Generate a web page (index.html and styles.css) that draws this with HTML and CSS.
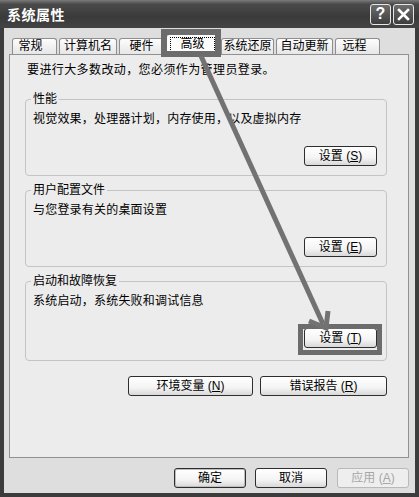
FILE: index.html
```html
<!DOCTYPE html>
<html lang="zh-CN">
<head>
	<meta charset="UTF-8">
	<title>系统属性</title>
	<link rel="stylesheet" href="styles.css">
</head>
<body>
	<div class="window">
		<div class="titlebar">
			<span class="title">系统属性</span>
			<span class="tbtn help">?</span>
			<span class="tbtn close">
				<svg width="13" height="13" viewBox="0 0 13 13"><path d="M2 2L11 11M11 2L2 11" stroke="#fff" stroke-width="2.6" stroke-linecap="square"/></svg>
			</span>
		</div>
		<div class="frame">
			<div class="tabs">
				<span class="tab t1">常规</span>
				<span class="tab t2">计算机名</span>
				<span class="tab t3">硬件</span>
				<span class="tab on"><span class="focus">高级</span></span>
				<span class="tab t5">系统还原</span>
				<span class="tab t6">自动更新</span>
				<span class="tab t7">远程</span>
			</div>
			<div class="panel">
				<p class="note">要进行大多数改动，您必须作为管理员登录。</p>
				<fieldset class="group">
					<legend>性能</legend>
					<p>视觉效果，处理器计划，内存使用，以及虚拟内存</p>
					<div class="act"><button class="btn">设置 (<u>S</u>)</button></div>
				</fieldset>
				<fieldset class="group">
					<legend>用户配置文件</legend>
					<p>与您登录有关的桌面设置</p>
					<div class="act"><button class="btn">设置 (<u>E</u>)</button></div>
				</fieldset>
				<fieldset class="group last">
					<legend>启动和故障恢复</legend>
					<p>系统启动，系统失败和调试信息</p>
					<div class="act"><button class="btn">设置 (<u>T</u>)</button></div>
				</fieldset>
				<div class="row">
					<button class="btn env">环境变量 (<u>N</u>)</button>
					<button class="btn err">错误报告 (<u>R</u>)</button>
				</div>
			</div>
			<div class="footer">
				<button class="btn def">确定</button>
				<button class="btn">取消</button>
				<button class="btn off">应用 (<u>A</u>)</button>
			</div>
		</div>

		<!-- 标注：高亮框和箭头 -->
		<div class="mark mark-tab"></div>
		<div class="mark mark-btn"></div>
		<svg class="arrow" width="419" height="497" viewBox="0 0 419 497">
			<line x1="201" y1="56" x2="323" y2="324" stroke="#727272" stroke-width="5"/>
			<polyline points="309,321 326,328 328,311" fill="none" stroke="#727272" stroke-width="5"/>
		</svg>
	</div>
</body>
</html>
```

FILE: styles.css
```css
* {
	margin: 0;
	padding: 0;
	box-sizing: border-box;
}
body {
	width: 419px;
	height: 497px;
	overflow: hidden;
	font-family: "Liberation Sans", "Noto Sans CJK SC", sans-serif;
	font-size: 12px;
	color: #000;
}
.window {
	position: relative;
	width: 419px;
	height: 497px;
	background: #3c3c3c;
	display: flex;
	flex-direction: column;
}
.titlebar {
	height: 28px;
	display: flex;
	align-items: center;
	gap: 2px;
	padding: 0 5px 0 7px;
	background: linear-gradient(#7a7a7a, #4a4a4a 15%, #3a3a3a 60%, #444);
}
.title {
	flex: 1;
	color: #fff;
	font-weight: bold;
	font-size: 14px;
	letter-spacing: 0.5px;
	font-family: "Noto Sans CJK SC", sans-serif;
}
.tbtn {
	width: 21px;
	height: 21px;
	border: 1px solid #e6e6e6;
	border-radius: 3px;
	background: linear-gradient(#6c6c6c, #3e3e3e);
	color: #fff;
	font-weight: bold;
	font-size: 16px;
	display: flex;
	align-items: center;
	justify-content: center;
}
.frame {
	flex: 1;
	margin: 0 4px 4px;
	padding: 0 6px 0 5px;
	background: #dedede;
	display: flex;
	flex-direction: column;
}
.tabs {
	height: 26px;
	display: flex;
	align-items: flex-end;
	gap: 2px;
	padding-left: 3px;
	position: relative;
	z-index: 1;
}
.tab {
	height: 16px;
	line-height: 15px;
	text-align: center;
	border: 1px solid #8e8e8e;
	border-bottom: none;
	border-radius: 3px 3px 0 0;
	background: linear-gradient(#fdfdfd, #e6e6e6);
	white-space: nowrap;
}
.t1 { width: 45px; padding-right: 8px; }
.t2 { width: 58px; }
.t3 { width: 45px; }
.t5 { width: 53px; }
.t6 { width: 57px; }
.t7 { width: 45px; padding-right: 6px; }
.tab.on {
	width: 53px;
	height: 21px;
	margin-bottom: -1px;
	padding-top: 2px;
	background: #fcfcfc;
}
.focus {
	display: inline-block;
	width: 45px;
	height: 15px;
	line-height: 13px;
	border: 1px dotted #000;
}
.panel {
	height: 404px;
	border: 1px solid #919191;
	background: #ececec;
	padding: 8px 21px 0 15px;
}
.note {
	line-height: 14px;
	margin-left: 2px;
	letter-spacing: 0.4px;
}
.group {
	margin-top: 7px;
	border: 1px solid #c4c4c4;
	border-radius: 4px;
	padding: 6px 9px 9px 7px;
}
.panel .group:first-of-type {
	margin-top: 15px;
}
.group.last {
	padding-bottom: 12px;
}
.group legend {
	line-height: 14px;
	padding: 0 2px;
	margin-left: -2px;
}
.group p {
	line-height: 14px;
	letter-spacing: 0.2px;
}
.act {
	display: flex;
	justify-content: flex-end;
	margin-top: 20px;
}
.btn {
	width: 73px;
	height: 20px;
	font-family: inherit;
	font-size: 12px;
	line-height: 18px;
	color: #000;
	border: 1px solid #2e2e2e;
	border-radius: 3px;
	background: linear-gradient(#ffffff, #f4f4f4 60%, #d8d8d8);
	white-space: nowrap;
}
.btn u {
	text-underline-offset: 1px;
}
.row {
	display: flex;
	justify-content: flex-end;
	gap: 7px;
	margin-top: 15px;
}
.env { width: 125px; }
.err { width: 127px; }
.footer {
	display: flex;
	justify-content: flex-end;
	gap: 9px;
	margin-top: 10px;
}
.footer .btn {
	width: 72px;
}
.btn.def {
	box-shadow: inset 0 0 0 1px #bdbdbd;
}
.btn.off {
	margin-left: 1px;
	color: #a6a6a6;
	border-color: #b9b9b9;
	background: #eeeeee;
}
.mark {
	position: absolute;
	border: 6px solid #6c6c6c;
	z-index: 3;
}
.mark-tab {
	left: 161px;
	top: 29px;
	width: 60px;
	height: 28px;
}
.mark-btn {
	left: 298px;
	top: 324px;
	width: 84px;
	height: 31px;
	border-width: 5px;
}
.arrow {
	position: absolute;
	left: 0;
	top: 0;
	z-index: 4;
}
```
